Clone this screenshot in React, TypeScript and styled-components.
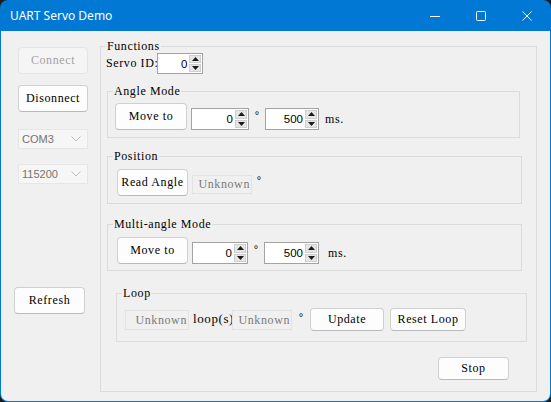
import React from "react";
import styled, { createGlobalStyle } from "styled-components";

const MONO = `"Liberation Serif", "DejaVu Serif", serif`;
const SANS = `"Liberation Sans", Arial, sans-serif`;

const Global = createGlobalStyle`
  html, body { margin: 0; padding: 0; background: #1c1c1c; }
  body { width: 551px; height: 402px; overflow: hidden; }
  * { box-sizing: border-box; }
`;

const Window = styled.div`
  width: 551px;
  height: 402px;
  background: #0078d4;
  border-radius: 8px;
  overflow: hidden;
  display: flex;
  flex-direction: column;
`;

const TitleBar = styled.div`
  height: 31px;
  flex-shrink: 0;
  display: flex;
  align-items: center;
  padding: 0 1px 0 10px;
  color: #fff;
  font-family: "Noto Sans", "Open Sans", sans-serif;
  font-size: 12px;
`;

const Title = styled.div`
  flex: 1;
  margin-top: -1px;
`;

const CaptionButton = styled.div`
  width: 46px;
  height: 31px;
  display: flex;
  align-items: center;
  justify-content: center;
`;

const Client = styled.div`
  flex: 1;
  margin: 0 1px 1px;
  background: #f0f0f0;
  border-radius: 0 0 7px 7px;
  display: flex;
  align-items: flex-start;
`;

const LeftCol = styled.div`
  width: 99px;
  flex-shrink: 0;
  display: flex;
  flex-direction: column;
  align-items: flex-start;
  padding: 16px 0 0 17px;
`;

const textStyle = `
  font-family: ${MONO};
  font-size: 12px;
  letter-spacing: 0.6px;
`;

const Btn = styled.button<{ $w: number; $h: number; $mt?: number; $ml?: number }>`
  width: ${(p) => p.$w}px;
  height: ${(p) => p.$h}px;
  margin: ${(p) => p.$mt ?? 0}px 0 0 ${(p) => p.$ml ?? 0}px;
  flex-shrink: 0;
  padding: 0;
  background: #fdfdfd;
  border: 1px solid #d0d0d0;
  border-bottom-color: #bababa;
  border-radius: 4px;
  ${textStyle}
  color: #000;
  &:disabled {
    background: #f5f5f5;
    border-color: #e5e5e5;
    color: #a3a3a3;
  }
`;

const Combo = styled.div<{ $mt: number }>`
  width: 70px;
  height: 20px;
  margin-top: ${(p) => p.$mt}px;
  border: 1px solid #e6e6e6;
  background: #f6f6f6;
  display: flex;
  align-items: center;
  justify-content: space-between;
  padding: 0 6px 0 3px;
  font-family: ${SANS};
  font-size: 11px;
  color: #737373;
`;

const Group = styled.div<{ $w: number; $h: number; $mt: number; $ml: number }>`
  position: relative;
  flex-shrink: 0;
  width: ${(p) => p.$w}px;
  height: ${(p) => p.$h}px;
  margin: ${(p) => p.$mt}px 0 0 ${(p) => p.$ml}px;
  border: 1px solid #dcdcdc;
  display: flex;
  flex-direction: column;
  align-items: flex-start;
`;

const Legend = styled.span`
  position: absolute;
  top: -8px;
  left: 5px;
  padding: 0 1px;
  background: #f0f0f0;
  ${textStyle}
  line-height: 14px;
  color: #000;
  white-space: pre;
`;

const Row = styled.div<{ $pt: number; $pl: number; $align?: string }>`
  display: flex;
  align-items: ${(p) => p.$align ?? "flex-start"};
  padding: ${(p) => p.$pt}px 0 0 ${(p) => p.$pl}px;
`;

const Label = styled.span<{ $ml?: number; $size?: number; $mt?: number }>`
  margin: ${(p) => p.$mt ?? 0}px 0 0 ${(p) => p.$ml ?? 0}px;
  ${textStyle}
  font-size: ${(p) => p.$size ?? 12}px;
  color: #000;
  white-space: pre;
`;

const Deg = styled.span<{ $w: number; $h: number; $mt?: number }>`
  width: ${(p) => p.$w}px;
  height: ${(p) => p.$h}px;
  margin-top: ${(p) => p.$mt ?? 0}px;
  flex-shrink: 0;
  display: flex;
  justify-content: center;
  padding-top: 1px;
  font-family: ${SANS};
  font-size: 11px;
  line-height: 12px;
  color: #000;
`;

const SpinBox = styled.div<{ $w: number; $h: number; $ml?: number; $mt?: number }>`
  width: ${(p) => p.$w}px;
  height: ${(p) => p.$h}px;
  margin: ${(p) => p.$mt ?? 0}px 0 0 ${(p) => p.$ml ?? 0}px;
  flex-shrink: 0;
  border: 1px solid #a3a3a3;
  background: #fff;
  display: flex;
  align-items: stretch;
`;

const SpinValue = styled.span`
  flex: 1;
  display: flex;
  align-items: center;
  justify-content: flex-end;
  padding-right: 2px;
  font-family: ${SANS};
  font-size: 11.5px;
  color: #000;
`;

const SpinButtons = styled.div`
  width: 13px;
  display: flex;
  flex-direction: column;
  padding: 1px 1px 1px 0;
  gap: 1px;
`;

const SpinArrow = styled.div`
  flex: 1;
  background: #e6e6e6;
  border: 1px solid #cfcfcf;
  display: flex;
  align-items: center;
  justify-content: center;
`;

const ReadOnly = styled.div<{ $w: number; $h: number; $ml?: number; $mt?: number }>`
  width: ${(p) => p.$w}px;
  height: ${(p) => p.$h}px;
  margin: ${(p) => p.$mt ?? 0}px 0 0 ${(p) => p.$ml ?? 0}px;
  flex-shrink: 0;
  border: 1px solid #e3e3e3;
  background: #f0f0f0;
  display: flex;
  align-items: center;
  justify-content: flex-end;
  padding-right: 1px;
  ${textStyle}
  color: #7a7a7a;
`;

const Unit = styled.span<{ $ml: number; $h: number }>`
  height: ${(p) => p.$h}px;
  margin-left: ${(p) => p.$ml}px;
  display: flex;
  align-items: center;
  ${textStyle}
  color: #000;
`;

const Tri = ({ up }: { up?: boolean }) => (
  <svg width="7" height="4" viewBox="0 0 7 4">
    <polygon points={up ? "3.5,0 7,4 0,4" : "0,0 7,0 3.5,4"} fill="#1a1a1a" />
  </svg>
);

const Spin = (props: { value: string; w: number; h: number; ml?: number; mt?: number }) => (
  <SpinBox $w={props.w} $h={props.h} $ml={props.ml} $mt={props.mt}>
    <SpinValue>{props.value}</SpinValue>
    <SpinButtons>
      <SpinArrow>
        <Tri up />
      </SpinArrow>
      <SpinArrow>
        <Tri />
      </SpinArrow>
    </SpinButtons>
  </SpinBox>
);

const Chevron = () => (
  <svg width="10" height="6" viewBox="0 0 10 6">
    <polyline points="0.5,0.5 5,5 9.5,0.5" fill="none" stroke="#bdbdbd" strokeWidth="1" />
  </svg>
);

export default function App() {
  return (
    <>
      <Global />
      <Window>
        <TitleBar>
          <Title>UART Servo Demo</Title>
          <CaptionButton>
            <svg width="10" height="10" viewBox="0 0 10 10">
              <line x1="0" y1="5.5" x2="10" y2="5.5" stroke="#fff" strokeWidth="1" />
            </svg>
          </CaptionButton>
          <CaptionButton>
            <svg width="10" height="10" viewBox="0 0 10 10">
              <rect x="0.5" y="0.5" width="9" height="9" rx="1" fill="none" stroke="#fff" strokeWidth="1" />
            </svg>
          </CaptionButton>
          <CaptionButton>
            <svg width="10" height="10" viewBox="0 0 10 10">
              <path d="M0.5 0.5 L9.5 9.5 M9.5 0.5 L0.5 9.5" stroke="#fff" strokeWidth="1" />
            </svg>
          </CaptionButton>
        </TitleBar>
        <Client>
          <LeftCol>
            <Btn $w={70} $h={27} disabled>
              Connect
            </Btn>
            <Btn $w={70} $h={27} $mt={11}>
              Disonnect
            </Btn>
            <Combo $mt={17}>
              COM3
              <Chevron />
            </Combo>
            <Combo $mt={15}>
              115200
              <Chevron />
            </Combo>
            <Btn $w={71} $h={27} $mt={103} $ml={-4}>
              Refresh
            </Btn>
          </LeftCol>
          <Group $w={437} $h={346} $mt={15} $ml={0}>
            <Legend>Functions</Legend>
            <Row $pt={6} $pl={5} $align="center">
              <Label>Servo ID:</Label>
              <Spin value="0" w={46} h={21} ml={-1} />
            </Row>

            <Group $w={413} $h={47} $mt={17} $ml={6}>
              <Legend>Angle Mode</Legend>
              <Row $pt={11} $pl={7} $align="flex-end">
                <Btn $w={72} $h={27}>Move to</Btn>
                <Spin value="0" w={58} h={22} ml={4} />
                <Deg $w={16} $h={22}>°</Deg>
                <Spin value="500" w={54} h={22} />
                <Unit $ml={6} $h={22}>ms.</Unit>
              </Row>
            </Group>

            <Group $w={415} $h={48} $mt={18} $ml={6}>
              <Legend>Position</Legend>
              <Row $pt={12} $pl={9}>
                <Btn $w={71} $h={27}>Read Angle</Btn>
                <ReadOnly $w={60} $h={19} $ml={4} $mt={6}>
                  Unknown
                </ReadOnly>
                <Deg $w={14} $h={19} $mt={4}>°</Deg>
              </Row>
            </Group>

            <Group $w={415} $h={47} $mt={20} $ml={6}>
              <Legend>Multi-angle Mode</Legend>
              <Row $pt={12} $pl={9} $align="flex-end">
                <Btn $w={71} $h={27}>Move to</Btn>
                <Spin value="0" w={56} h={22} ml={4} />
                <Deg $w={16} $h={22}>°</Deg>
                <Spin value="500" w={55} h={22} />
                <Unit $ml={9} $h={22}>ms.</Unit>
              </Row>
            </Group>

            <Group $w={411} $h={49} $mt={22} $ml={15}>
              <Legend>Loop</Legend>
              <Row $pt={14} $pl={8}>
                <ReadOnly $w={64} $h={20} $mt={2}>
                  Unknown
                </ReadOnly>
                <Label $ml={4} $size={13} $mt={3}>
                  loop(s)
                </Label>
                <ReadOnly $w={60} $h={20} $mt={2} $ml={-2}>
                  Unknown
                </ReadOnly>
                <Deg $w={18} $h={20} $mt={2}>°</Deg>
                <Btn $w={74} $h={23}>Update</Btn>
                <Btn $w={76} $h={23} $ml={6}>
                  Reset Loop
                </Btn>
              </Row>
            </Group>

            <Btn $w={71} $h={23} $mt={15} $ml={337}>
              Stop
            </Btn>
          </Group>
        </Client>
      </Window>
    </>
  );
}
